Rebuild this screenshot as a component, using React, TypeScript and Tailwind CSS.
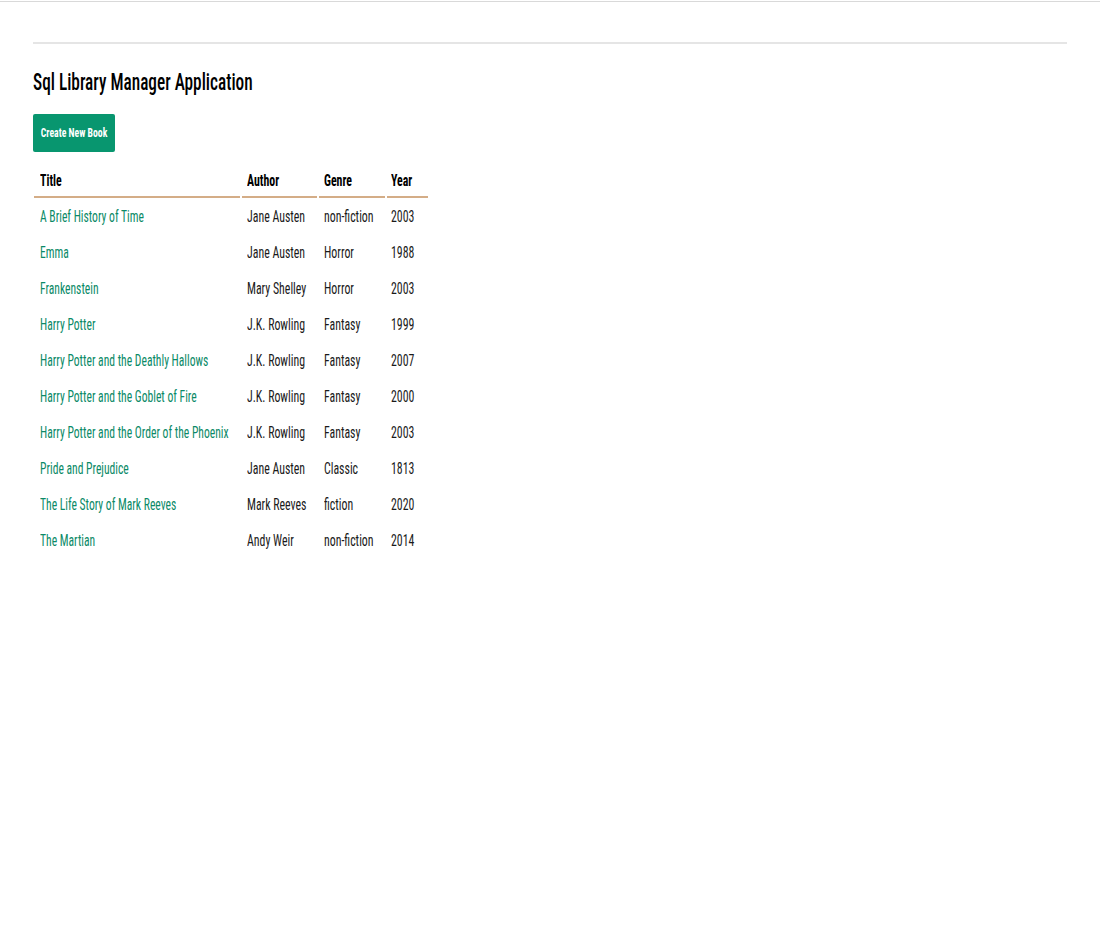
import React from "react";

const books = [
  ["A Brief History of Time", "Jane Austen", "non-fiction", "2003"],
  ["Emma", "Jane Austen", "Horror", "1988"],
  ["Frankenstein", "Mary Shelley", "Horror", "2003"],
  ["Harry Potter", "J.K. Rowling", "Fantasy", "1999"],
  ["Harry Potter and the Deathly Hallows", "J.K. Rowling", "Fantasy", "2007"],
  ["Harry Potter and the Goblet of Fire", "J.K. Rowling", "Fantasy", "2000"],
  ["Harry Potter and the Order of the Phoenix", "J.K. Rowling", "Fantasy", "2003"],
  ["Pride and Prejudice", "Jane Austen", "Classic", "1813"],
  ["The Life Story of Mark Reeves", "Mark Reeves", "fiction", "2020"],
  ["The Martian", "Andy Weir", "non-fiction", "2014"],
];

function T({ children }: { children: React.ReactNode }) {
  return <span className="inline-block whitespace-nowrap origin-left scale-x-[0.74]">{children}</span>;
}

export default function App() {
  return (
    <div className="min-h-[938px] bg-white font-['Roboto_Condensed',Roboto,sans-serif] [font-stretch:condensed] text-[#111]">
      <div className="h-[1px] mt-[1px] bg-[#d9d9d9]" />
      <div className="px-[33px] pt-[40px]">
        <div className="h-[2px] bg-[#e5e5e5]" />
        <h1 className="mt-[23px] text-[24px] leading-[30px] font-medium text-black">
          <span className="inline-block whitespace-nowrap origin-left scale-x-[0.72]">Sql Library Manager Application</span>
        </h1>
        <button className="mt-[17px] h-[38px] w-[82px] rounded-[2px] bg-[#08966f] text-white text-[12px] font-bold flex items-center justify-center overflow-visible">
          <span className="inline-block whitespace-nowrap origin-center scale-x-[0.81]">Create New Book</span>
        </button>
        <table className="mt-[14px] w-[398px] table-fixed border-separate border-spacing-x-[2px] border-spacing-y-0 -ml-[1px] text-[16px]">
          <colgroup>
            <col className="w-[206px]" />
            <col className="w-[75px]" />
            <col className="w-[66px]" />
            <col className="w-[41px]" />
          </colgroup>
          <thead>
            <tr className="h-[32px]">
              <th className="text-left font-bold px-[6px] border-b-2 border-[#d4ad87] text-black overflow-visible"><T>Title</T></th>
              <th className="text-left font-bold px-[5px] border-b-2 border-[#d4ad87] text-black overflow-visible"><T>Author</T></th>
              <th className="text-left font-bold px-[5px] border-b-2 border-[#d4ad87] text-black overflow-visible"><T>Genre</T></th>
              <th className="text-left font-bold px-[4px] border-b-2 border-[#d4ad87] text-black overflow-visible"><T>Year</T></th>
            </tr>
          </thead>
          <tbody>
            {books.map((b) => (
              <tr key={b[0]} className="h-[36px]">
                <td className="px-[6px] pt-[2px] overflow-visible">
                  <a href="#" className="text-[#0b8a67]">
                    <span className="inline-block whitespace-nowrap origin-left scale-x-[0.725]">{b[0]}</span>
                  </a>
                </td>
                <td className="px-[5px] pt-[2px] text-[#1a1a1a] overflow-visible"><T>{b[1]}</T></td>
                <td className="px-[5px] pt-[2px] text-[#1a1a1a] overflow-visible"><T>{b[2]}</T></td>
                <td className="px-[4px] pt-[2px] text-[#1a1a1a] overflow-visible"><T>{b[3]}</T></td>
              </tr>
            ))}
          </tbody>
        </table>
      </div>
    </div>
  );
}
